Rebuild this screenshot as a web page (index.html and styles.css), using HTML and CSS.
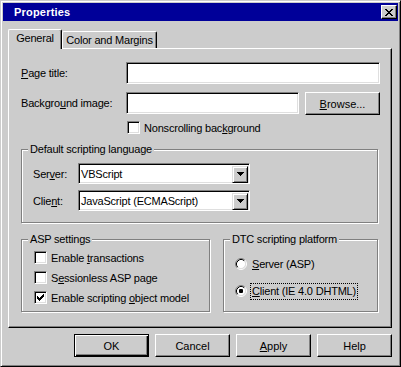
FILE: index.html
```html
<!DOCTYPE html>
<html lang="en">
<head>
    <meta charset="UTF-8">
    <title>Properties</title>
    <link rel="stylesheet" href="styles.css">
</head>
<body>

<div class="window">
    <div class="titlebar">
        <span class="title">Properties</span>
        <button class="close-btn" type="button">
            <svg width="8" height="7" viewBox="0 0 8 7"><path d="M0 0h2v1h-2z M6 0h2v1h-2z M1 1h2v1h-2z M5 1h2v1h-2z M2 2h4v1h-4z M3 3h2v1h-2z M2 4h4v1h-4z M1 5h2v1h-2z M5 5h2v1h-2z M0 6h2v1h-2z M6 6h2v1h-2z" fill="#000"/></svg>
        </button>
    </div>

    <div class="content">
        <div class="tabs">
            <div class="tab active">General</div>
            <div class="tab">Color and Margins</div>
        </div>

        <div class="panel">
            <div class="row">
                <label class="row-label" for="pageTitle"><u>P</u>age title:</label>
                <input class="textbox" id="pageTitle" type="text">
            </div>

            <div class="row row-bg">
                <label class="row-label" for="bgImage">Backgro<u>u</u>nd image:</label>
                <input class="textbox" id="bgImage" type="text">
                <button class="btn browse" type="button"><u>B</u>rowse...</button>
            </div>

            <div class="check-row nonscroll">
                <span class="check"></span>
                <span>Nonscrolling bac<u>k</u>ground</span>
            </div>

            <div class="group lang">
                <span class="group-title">Default scripting language</span>
                <div class="combo-row">
                    <span class="combo-label">Ser<u>v</u>er:</span>
                    <div class="combo">
                        <span class="combo-text">VBScript</span>
                        <span class="combo-btn"><svg width="7" height="4" viewBox="0 0 7 4"><path d="M0 0h7v1h-1v1h-1v1h-1v1h-1v-1h-1v-1h-1v-1h-1z" fill="#000"/></svg></span>
                    </div>
                </div>
                <div class="combo-row second">
                    <span class="combo-label">Clie<u>n</u>t:</span>
                    <div class="combo">
                        <span class="combo-text">JavaScript (ECMAScript)</span>
                        <span class="combo-btn"><svg width="7" height="4" viewBox="0 0 7 4"><path d="M0 0h7v1h-1v1h-1v1h-1v1h-1v-1h-1v-1h-1v-1h-1z" fill="#000"/></svg></span>
                    </div>
                </div>
            </div>

            <div class="group-row">
                <div class="group asp">
                    <span class="group-title">ASP settings</span>
                    <div class="check-row">
                        <span class="check"></span>
                        <span>Enable <u>t</u>ransactions</span>
                    </div>
                    <div class="check-row">
                        <span class="check"></span>
                        <span>S<u>e</u>ssionless ASP page</span>
                    </div>
                    <div class="check-row">
                        <span class="check">
                            <svg width="7" height="7" viewBox="0 0 7 7"><path d="M6 0h1v1h-1z M5 1h2v1h-2z M0 2h1v1h-1z M4 2h3v1h-3z M0 3h2v1h-2z M3 3h3v1h-3z M0 4h5v1h-5z M1 5h3v1h-3z M2 6h1v1h-1z" fill="#000"/></svg>
                        </span>
                        <span>Enable scripting <u>o</u>bject model</span>
                    </div>
                </div>

                <div class="group dtc">
                    <span class="group-title">DTC scripting platform</span>
                    <div class="radio-row">
                        <svg class="radio" width="12" height="12" viewBox="0 0 12 12">
                            <circle cx="6" cy="6" r="4.5" fill="#fff"/>
                            <path d="M2.11 9.89A5.5 5.5 0 0 1 9.89 2.11" fill="none" stroke="#808080"/>
                            <path d="M9.89 2.11A5.5 5.5 0 0 1 2.11 9.89" fill="none" stroke="#fff"/>
                            <path d="M2.82 9.18A4.5 4.5 0 0 1 9.18 2.82" fill="none" stroke="#000"/>
                            <path d="M9.18 2.82A4.5 4.5 0 0 1 2.82 9.18" fill="none" stroke="#dfdfdf"/>
                        </svg>
                        <span class="radio-label"><u>S</u>erver (ASP)</span>
                    </div>
                    <div class="radio-row second">
                        <svg class="radio" width="12" height="12" viewBox="0 0 12 12">
                            <circle cx="6" cy="6" r="4.5" fill="#fff"/>
                            <path d="M2.11 9.89A5.5 5.5 0 0 1 9.89 2.11" fill="none" stroke="#808080"/>
                            <path d="M9.89 2.11A5.5 5.5 0 0 1 2.11 9.89" fill="none" stroke="#fff"/>
                            <path d="M2.82 9.18A4.5 4.5 0 0 1 9.18 2.82" fill="none" stroke="#000"/>
                            <path d="M9.18 2.82A4.5 4.5 0 0 1 2.82 9.18" fill="none" stroke="#dfdfdf"/>
                            <rect x="4" y="4" width="4" height="4" rx="1" fill="#000"/>
                        </svg>
                        <span class="radio-label focused"><u>C</u>lient (IE 4.0 DHTML)</span>
                    </div>
                </div>
            </div>
        </div>

        <div class="buttons">
            <button class="btn default" type="button">OK</button>
            <button class="btn" type="button">Cancel</button>
            <button class="btn" type="button"><u>A</u>pply</button>
            <button class="btn" type="button">Help</button>
        </div>
    </div>
</div>

</body>
</html>
```

FILE: styles.css
```css
body {
    margin: 0;
    font-family: "Liberation Sans", Arial, sans-serif;
    font-size: 11px;
    letter-spacing: -0.2px;
    color: #000;
    background-color: #cccccc;
}

.window {
    width: 401px;
    height: 367px;
    box-sizing: border-box;
    background-color: #cccccc;
    border: 1px solid;
    border-color: #cccccc #000 #000 #cccccc;
    box-shadow: inset 1px 1px 0 #fff, inset -1px -1px 0 #808080;
    padding: 2px;
    display: flex;
    flex-direction: column;
}

.titlebar {
    height: 18px;
    background-color: #000099;
    color: #fff;
    display: flex;
    align-items: center;
    justify-content: space-between;
    padding: 0 1px 0 11px;
}

.title {
    font-weight: bold;
    letter-spacing: 0.2px;
}

.close-btn {
    width: 16px;
    height: 14px;
    padding: 0;
    background-color: #cccccc;
    border: 1px solid;
    border-color: #fff #000 #000 #fff;
    box-shadow: inset -1px -1px 0 #808080;
    display: flex;
    align-items: center;
    justify-content: center;
}

.content {
    padding: 8px 6px 0 5px;
}

/* tabs */
.tabs {
    display: flex;
    align-items: flex-end;
    height: 19px;
}

.tab {
    box-sizing: border-box;
    height: 17px;
    width: 95px;
    padding-top: 2px;
    line-height: 13px;
    text-align: center;
    border: 1px solid;
    border-bottom: none;
    border-color: #fff #000 #000 #fff;
    box-shadow: inset -1px 0 0 #808080;
    border-radius: 2px 2px 0 0;
}

.tab.active {
    position: relative;
    z-index: 1;
    width: 54px;
    height: 20px;
    margin-bottom: -1px;
    background-color: #cccccc;
}

.panel {
    box-sizing: border-box;
    width: 384px;
    height: 280px;
    padding: 13px 11px 0 12px;
    border: 1px solid;
    border-color: #fff #000 #000 #fff;
    box-shadow: inset -1px -1px 0 #808080;
}

/* form rows */
.row {
    display: flex;
    align-items: flex-start;
}

.row-bg {
    margin-top: 8px;
}

.row-label {
    width: 105px;
    flex-shrink: 0;
    line-height: 22px;
}

.textbox {
    flex: 1;
    min-width: 0;
    height: 22px;
    box-sizing: border-box;
    margin: 0;
    padding: 0 3px;
    font: inherit;
    background-color: #fff;
    border: 1px solid;
    border-color: #808080 #fff #fff #808080;
    box-shadow: inset 1px 1px 0 #000, inset -1px -1px 0 #dfdfdf;
    outline: none;
}

.btn {
    width: 75px;
    height: 23px;
    box-sizing: border-box;
    padding: 0;
    font: inherit;
    color: #000;
    background-color: #cccccc;
    border: 1px solid;
    border-color: #fff #000 #000 #fff;
    box-shadow: inset -1px -1px 0 #808080;
}

.btn.default {
    border-color: #000;
    box-shadow: inset 1px 1px 0 #fff, inset -1px -1px 0 #000, inset -2px -2px 0 #808080;
}

.browse {
    margin-left: 6px;
}

/* checkboxes */
.check-row {
    display: flex;
    align-items: center;
    height: 13px;
}

.nonscroll {
    margin-top: 6px;
    padding-left: 106px;
}

.check {
    width: 13px;
    height: 13px;
    box-sizing: border-box;
    flex-shrink: 0;
    margin-right: 4px;
    background-color: #fff;
    border: 1px solid;
    border-color: #808080 #fff #fff #808080;
    box-shadow: inset 1px 1px 0 #000, inset -1px -1px 0 #dfdfdf;
    display: flex;
    align-items: center;
    justify-content: center;
}

/* group boxes */
.group {
    box-sizing: border-box;
    display: flex;
    flex-direction: column;
    border: 1px solid #808080;
    box-shadow: 1px 1px 0 #fff, inset 1px 1px 0 #fff;
}

.group-title {
    align-self: flex-start;
    margin-top: -7px;
    padding: 0 2px;
    line-height: 13px;
    background-color: #cccccc;
}

.lang {
    width: 357px;
    margin-top: 15px;
    padding: 0 10px 11px 11px;
}

.lang .group-title {
    margin-left: -5px;
}

.combo-row {
    display: flex;
    align-items: center;
    margin-top: 7px;
}

.combo-row.second {
    margin-top: 6px;
}

.combo-label {
    width: 45px;
}

.combo {
    width: 172px;
    height: 21px;
    box-sizing: border-box;
    display: flex;
    align-items: center;
    justify-content: space-between;
    padding: 0 1px 0 2px;
    background-color: #fff;
    border: 1px solid;
    border-color: #808080 #fff #fff #808080;
    box-shadow: inset 1px 1px 0 #000, inset -1px -1px 0 #dfdfdf;
}

.combo-text {
    padding-top: 1px;
}

.combo-btn {
    width: 16px;
    height: 17px;
    box-sizing: border-box;
    margin-top: 1px;
    background-color: #cccccc;
    border: 1px solid;
    border-color: #dfdfdf #000 #000 #dfdfdf;
    box-shadow: inset 1px 1px 0 #fff, inset -1px -1px 0 #808080;
    display: flex;
    align-items: center;
    justify-content: center;
}

.group-row {
    display: flex;
    gap: 13px;
    margin-top: 16px;
}

.asp {
    width: 189px;
    height: 73px;
    padding-left: 12px;
}

.asp .group-title {
    margin-left: -6px;
}

.asp .check-row {
    margin-top: 7px;
}

.asp .group-title + .check-row {
    margin-top: 5px;
}

.dtc {
    width: 155px;
    height: 73px;
    padding-left: 11px;
}

.dtc .group-title {
    margin-left: -5px;
}

/* radios */
.radio-row {
    display: flex;
    align-items: center;
    height: 12px;
    margin-top: 12px;
}

.radio-row.second {
    margin-top: 15px;
}

.radio {
    flex-shrink: 0;
    margin-right: 3px;
}

.radio-label {
    padding: 0 1px;
    line-height: 15px;
    border: 1px solid transparent;
}

.radio-label.focused {
    border: 1px dotted #000;
}

/* dialog buttons */
.buttons {
    width: 384px;
    display: flex;
    justify-content: flex-end;
    gap: 6px;
    margin-top: 6px;
}
```
